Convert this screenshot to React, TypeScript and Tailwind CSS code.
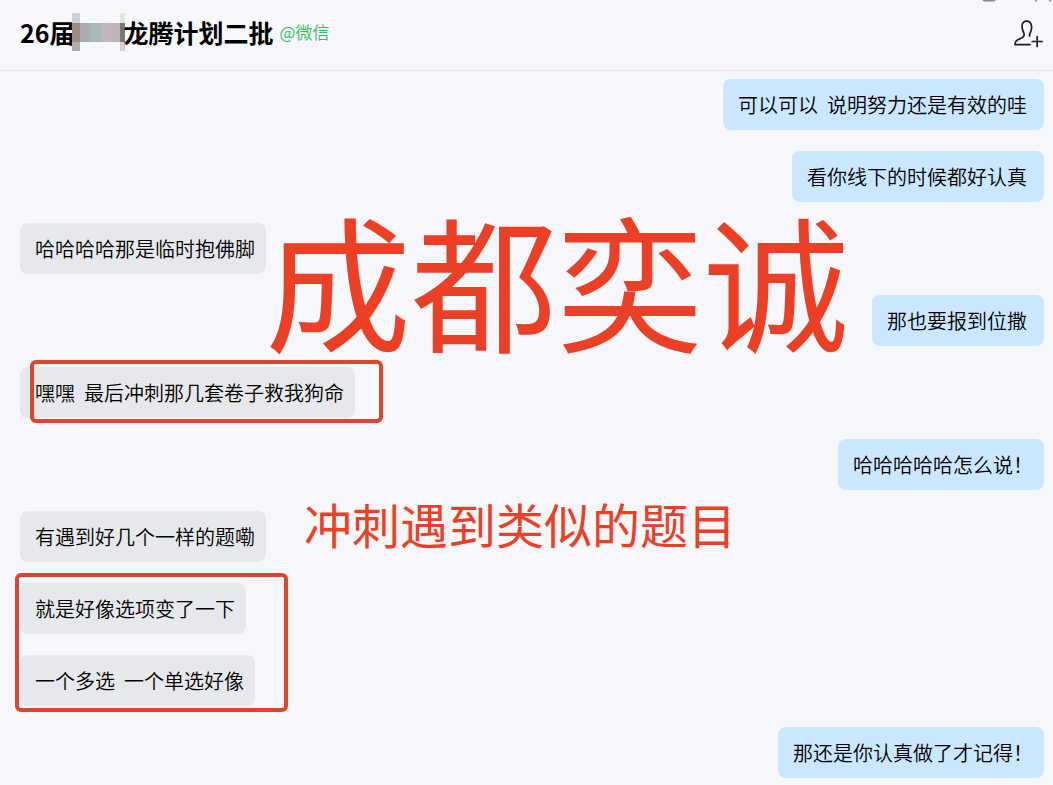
type Message = {
  text: string;
  mine?: boolean;
  // Full-width closing marks carry blank space, so their bubble has less padding.
  endsWithMark?: boolean;
};

const messages: Message[] = [
  { text: "可以可以  说明努力还是有效的哇", mine: true },
  { text: "看你线下的时候都好认真", mine: true },
  { text: "哈哈哈哈那是临时抱佛脚" },
  { text: "那也要报到位撒", mine: true },
  { text: "嘿嘿  最后冲刺那几套卷子救我狗命" },
  { text: "哈哈哈哈哈怎么说！", mine: true, endsWithMark: true },
  { text: "有遇到好几个一样的题嘞" },
  { text: "就是好像选项变了一下" },
  { text: "一个多选  一个单选好像" },
  { text: "那还是你认真做了才记得！", mine: true, endsWithMark: true },
];

function WindowControls() {
  return (
    <svg className="absolute top-0 right-0" width="73" height="3" viewBox="0 0 73 3" aria-hidden="true">
      <path d="M2 0h14l-2 1.5H4z" fill="#8a8c90" />
      <path d="M57 0l-2 1.5M69 0l2 1.5" stroke="#8a8c90" strokeWidth="1.5" />
    </svg>
  );
}

function AddMemberIcon() {
  return (
    <svg
      width="30"
      height="28"
      viewBox="0 0 30 28"
      fill="none"
      stroke="#1c1d1f"
      strokeWidth="1.7"
      strokeLinecap="round"
      strokeLinejoin="round"
      aria-hidden="true"
    >
      <path d="M15.600 16C15.400 14.800 15.800 13.800 16.400 12.400C17.400 10.200 17.900 8.400 17.500 6C17 2.800 15.200 1.200 12.800 1.200C10 1.200 8.200 3.200 8 6C7.800 8.800 8.800 11 9.800 13C10.600 14.800 10.200 16.400 8.400 17.400L3.400 20C1.400 21.200 .8 22.600 .9 24.600H16" />
      <path d="M18.200 21.500H28.200M23.200 16.500V26.500" />
    </svg>
  );
}

function Bubble({ text, mine, endsWithMark }: Message) {
  const tone = mine ? "bg-[#cae7ff]" : "bg-[#e6e8eb]";
  const end = endsWithMark || !mine ? "pr-[11px]" : "pr-[17px]";
  return (
    <li className={`flex ${mine ? "justify-end" : "justify-start"}`}>
      <p
        className={`rounded-lg py-[11px] pl-[15px] text-[20px] leading-[29px] font-[350] whitespace-pre text-black ${tone} ${end}`}
      >
        {text}
      </p>
    </li>
  );
}

export default function App() {
  return (
    <div className="min-h-screen overflow-x-hidden bg-[#f5f7fb] font-['Noto_Sans_CJK_SC',sans-serif]">
      <header className="relative flex h-[71px] items-center justify-between border-b border-[#e3e5e9] pr-[9px] pb-[6px] pl-5">
        <div className="flex items-center gap-[6px]">
          <h1 className="flex items-center text-[25px] leading-8 font-bold text-black">
            <span>26届</span>
            <svg className="-mx-[3px] shrink-0" width="55" height="38" viewBox="0 0 55 38" aria-hidden="true">
              <path d="M0 0h8v10H0z" fill="#cfd1d5" />
              <path d="M0 10h8v19H0z" fill="#9c8b80" />
              <path d="M0 29h8v9H0z" fill="#adadb0" />
              <path d="M8 10h10v19H8z" fill="#a9adb0" />
              <path d="M18 10h11v19H18z" fill="#a9b8b8" />
              <path d="M29 10h10v19H29z" fill="#c3b5bb" />
              <path d="M39 10h9v19h-9z" fill="#bdb4b6" />
              <path d="M48 0h5v10h-5z" fill="#ebe3d5" />
              <path d="M48 10h5v19h-5z" fill="#77777a" />
              <path d="M48 29h5v9h-5z" fill="#d4d0cf" />
            </svg>
            <span>龙腾计划二批</span>
          </h1>
          <span className="text-[17px] leading-6 font-[350] text-[#2fbf55]">@微信</span>
        </div>
        <button type="button" aria-label="添加成员" className="flex pt-1">
          <AddMemberIcon />
        </button>
        <WindowControls />
      </header>

      <main className="relative">
        <ul className="flex flex-col gap-[21px] pt-2 pr-[9px] pb-[7px] pl-5">
          {messages.map((message) => (
            <Bubble key={message.text} {...message} />
          ))}
        </ul>

        <div className="absolute top-[289px] left-[30px] h-[63px] w-[353px] rounded-md border-4 border-[#dc452e]" />
        <div className="absolute top-[502px] left-[15px] h-[139px] w-[273px] rounded-md border-4 border-[#dc452e]" />
        <p className="absolute top-[135px] left-[265px] text-[146px] leading-[144px] whitespace-nowrap text-[#eb4026]">
          成都奕诚
        </p>
        <p className="absolute top-[420px] left-[304px] text-[48px] leading-[64px] whitespace-nowrap text-[#eb4026]">
          冲刺遇到类似的题目
        </p>
      </main>
    </div>
  );
}
